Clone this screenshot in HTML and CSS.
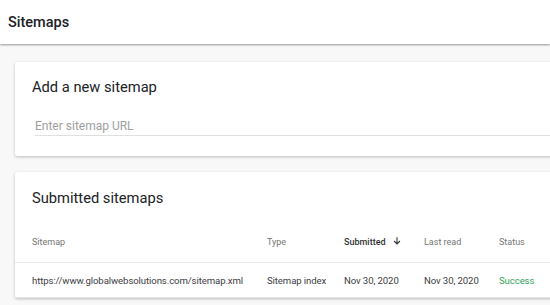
FILE: index.html
```html
<!DOCTYPE html>
<html>
<head>
<meta charset="utf-8">
<link rel="stylesheet" href="styles.css">
</head>
<body>
<header class="topbar"><h1 class="page-title">Sitemaps</h1></header>
<main class="content">
  <section class="card add-card">
    <h2 class="card-title">Add a new sitemap</h2>
    <div class="url-field"><span class="placeholder">Enter sitemap URL</span></div>
  </section>
  <section class="card list-card">
    <h2 class="card-title">Submitted sitemaps</h2>
    <table class="sitemap-table">
      <thead>
        <tr>
          <th class="col-sitemap">Sitemap</th>
          <th class="col-type">Type</th>
          <th class="col-submitted active">Submitted <svg class="sort-icon" viewBox="0 0 24 24" width="10" height="10"><path d="M12 3v16M5 12l7 7 7-7" fill="none" stroke="#333" stroke-width="2.6"/></svg></th>
          <th class="col-read">Last read</th>
          <th class="col-status">Status</th>
        </tr>
      </thead>
      <tbody>
        <tr>
          <td class="col-sitemap">https://www.globalwebsolutions.com/sitemap.xml</td>
          <td class="col-type">Sitemap index</td>
          <td class="col-submitted">Nov 30, 2020</td>
          <td class="col-read">Nov 30, 2020</td>
          <td class="col-status success">Success</td>
        </tr>
      </tbody>
    </table>
  </section>
</main>
</body>
</html>
```
FILE: styles.css
```css
* { box-sizing: border-box; }
html, body { margin: 0; padding: 0; }
body {
  background: #f8f8f8;
  font-family: Roboto, "Liberation Sans", sans-serif;
  color: #202124;
  overflow: hidden;
  width: 550px;
  height: 305px;
}
.topbar {
  background: #fff;
  height: 44px;
  display: flex;
  align-items: center;
  padding-left: 8px;
  box-shadow: 0 1px 2px rgba(0,0,0,0.4);
  position: relative;
  z-index: 1;
}
.page-title {
  margin: 0;
  font-size: 14.5px;
  font-weight: 500;
  color: #202124;
}
.content {
  padding: 18px 0 0 15px;
  display: flex;
  flex-direction: column;
  gap: 16px;
}
.card {
  background: #fff;
  width: 560px;
  box-shadow: 0 1px 3px rgba(0,0,0,0.25);
  border-radius: 2px;
}
.card-title {
  margin: 0;
  font-size: 14.7px;
  line-height: 24px;
  font-weight: 400;
  color: #202124;
  padding-left: 17px;
}
.add-card {
  height: 94px;
  padding-top: 13px;
}
.url-field {
  margin: 19px 0 0 20px;
  border-bottom: 1px solid #e0e0e0;
  height: 18px;
}
.placeholder {
  display: block;
  font-size: 12px;
  line-height: 16px;
  color: #9e9e9e;
}
.list-card {
  padding-top: 14px;
}
.sitemap-table {
  border-collapse: collapse;
  width: 100%;
  table-layout: fixed;
}
.sitemap-table th, .sitemap-table td {
  text-align: left;
  padding: 0;
  white-space: nowrap;
}
.sitemap-table th {
  font-size: 9px;
  font-weight: 400;
  color: #757575;
  line-height: 14px;
  padding-top: 25px;
  padding-bottom: 13px;
  border-bottom: 1px solid #e6e6e6;
}
.sitemap-table th.active {
  color: #333;
  font-weight: 500;
}
.sort-icon {
  vertical-align: -1px;
  margin-left: 4px;
}
.sitemap-table td {
  font-size: 9.6px;
  letter-spacing: -0.1px;
  color: #3c4043;
  line-height: 16px;
  padding-top: 10px;
  padding-bottom: 8px;
  border-bottom: 1px solid #e6e6e6;
}
.col-sitemap { width: 252px; padding-left: 17px !important; }
.col-type { width: 77px; }
.col-submitted { width: 80px; }
.col-read { width: 75px; }
.success { color: #34a35a !important; }
```
